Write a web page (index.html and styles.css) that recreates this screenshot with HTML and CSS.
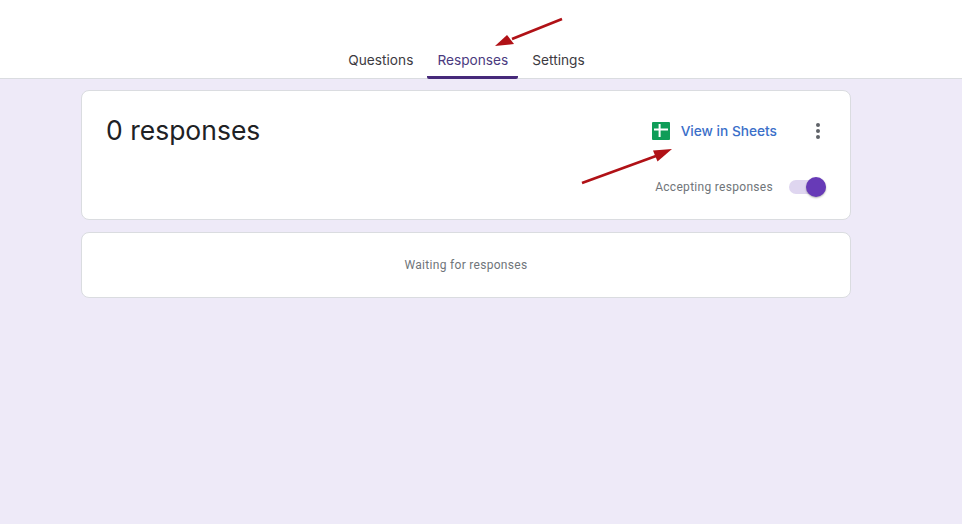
FILE: index.html
```html
<!DOCTYPE html>
<html lang="en">
<head>
<meta charset="utf-8">
<title>Responses</title>
<link rel="stylesheet" href="styles.css">
</head>
<body>
<header class="topbar">
  <nav class="tabs">
    <a class="tab">Questions</a>
    <a class="tab active">Responses</a>
    <a class="tab">Settings</a>
  </nav>
</header>
<main class="content">
  <section class="card summary">
    <div class="summary-top">
      <h1 class="count">0 responses</h1>
      <div class="actions">
        <a class="sheets">
          <svg class="sheets-icon" width="18" height="18" viewBox="0 0 18 18"><rect width="18" height="18" rx="1" fill="#0f9d58"/><path d="M2 6.600h14v2H2zM6.600 2h2v13h-2z" fill="#fff"/></svg>
          <span>View in Sheets</span>
        </a>
        <button class="more" aria-label="More"><i></i><i></i><i></i></button>
      </div>
    </div>
    <div class="accepting">
      <span class="accepting-label">Accepting responses</span>
      <span class="switch"><span class="knob"></span></span>
    </div>
  </section>
  <section class="card waiting">Waiting for responses</section>
</main>
<svg class="arrows" width="962" height="524" viewBox="0 0 962 524">
  <path class="arrow-line" d="M562 19 L512 39"/>
  <path class="arrow-head" d="M495 46 L507 35 L514 44 Z"/>
  <path class="arrow-line" d="M582 183 L656 156"/>
  <path class="arrow-head" d="M672 149 L653 150.500 L657.500 161.500 Z"/>
</svg>
</body>
</html>
```
FILE: styles.css
```css
* { box-sizing: border-box; }
html, body { margin: 0; height: 100%; }
body {
  background: #eeeaf8;
  font-family: Roboto, "Liberation Sans", sans-serif;
  position: relative;
  overflow: hidden;
}
.topbar {
  height: 79px;
  padding-right: 29px;
  background: #fff;
  border-bottom: 1px solid #dadce0;
  display: flex;
  justify-content: center;
  align-items: flex-end;
}
.tabs { display: flex; gap: 4px; margin-bottom: -1px; }
.tab {
  height: 37px;
  padding: 1px 10px 0;
  display: flex;
  align-items: center;
  font-family: Inter, sans-serif;
  font-size: 13.7px;
  color: #3c3a41;
  border-bottom: 3px solid transparent;
  border-radius: 0 0 2px 2px;
}
.tab.active { color: #4a3a7e; border-bottom-color: #46297a; }
.content {
  width: 770px;
  margin: 11px 0 0 81px;
  display: flex;
  flex-direction: column;
  gap: 12px;
}
.card {
  background: #fff;
  border: 1px solid #dadce0;
  border-radius: 8px;
}
.summary { height: 130px; padding: 24px 20px 0 24px; }
.summary-top { display: flex; justify-content: space-between; align-items: center; height: 32px; }
.count {
  margin: 0;
  padding-bottom: 2px;
  font-family: Inter, sans-serif;
  font-weight: 400;
  font-size: 26.5px;
  line-height: 30px;
  color: #202124;
}
.actions { display: flex; align-items: center; }
.sheets { display: flex; align-items: center; gap: 11px; color: #3b6fc9; font-family: Inter, sans-serif; font-size: 13.700px; font-weight: 500; }
.sheets-icon { display: block; }
.more {
  width: 24px; height: 24px; margin-left: 29px;
  padding: 0; border: 0; background: none;
  display: flex; flex-direction: column; align-items: center; justify-content: center; gap: 2px;
}
.more i { width: 4px; height: 4px; border-radius: 50%; background: #5f6368; }
.accepting { display: flex; justify-content: flex-end; align-items: center; margin-top: 33px; padding-right: 4px; }
.accepting-label { font-size: 12px; letter-spacing: .3px; color: #70757a; margin-right: 16px; }
.switch { display: block; width: 37px; height: 14px; border-radius: 7px; background: #dfd6f0; position: relative; }
.knob {
  position: absolute; right: 0; top: -3px;
  width: 20px; height: 20px; border-radius: 50%;
  background: #673ab7;
  box-shadow: 0 1px 2px rgba(0,0,0,.3);
}
.waiting {
  height: 66px;
  display: flex; align-items: center; justify-content: center;
  font-size: 12px; letter-spacing: .3px; color: #70757a;
}
.arrows { position: absolute; left: 0; top: 0; pointer-events: none; }
.arrow-line { fill: none; stroke: #b01116; stroke-width: 2.6; }
.arrow-head { fill: #b01116; }
```
